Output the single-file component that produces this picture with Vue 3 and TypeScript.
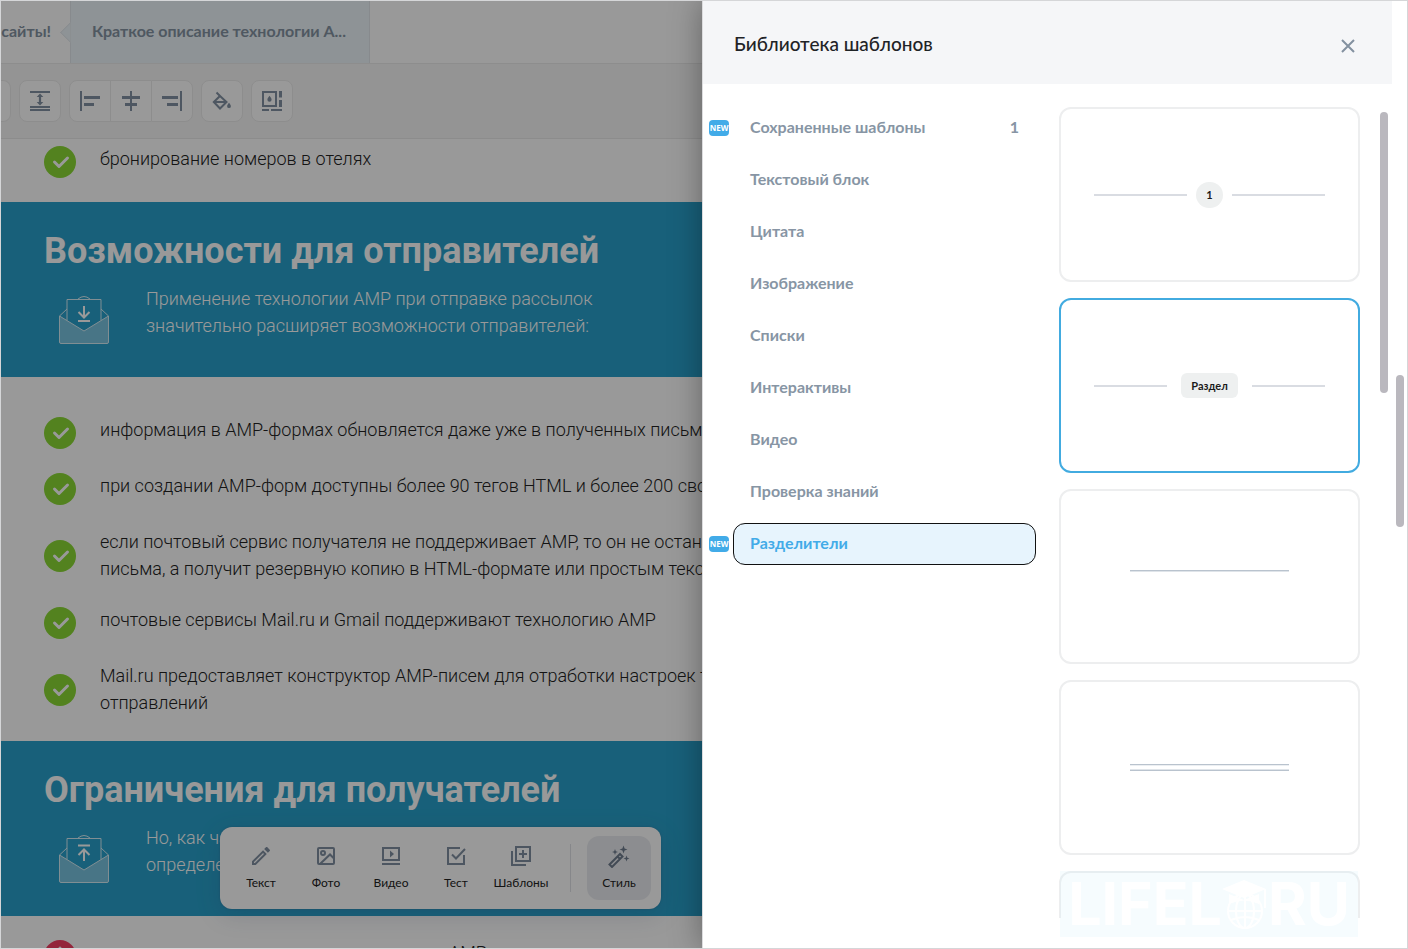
<script setup lang="ts">
import { ref } from 'vue'

interface ListItem { lines: string[] }
interface Category { name: string; isNew?: boolean; count?: number }
interface Tool { name: string; icon: string }

const features: ListItem[] = [
  { lines: ['информация в AMP-формах обновляется даже уже в полученных письмах'] },
  { lines: ['при создании AMP-форм доступны более 90 тегов HTML и более 200 свойств'] },
  {
    lines: [
      'если почтовый сервис получателя не поддерживает AMP, то он не останется',
      'письма, а получит резервную копию в HTML-формате или простым текстом',
    ],
  },
  { lines: ['почтовые сервисы Mail.ru и Gmail поддерживают технологию AMP'] },
  { lines: ['Mail.ru предоставляет конструктор AMP-писем для отработки настроек таких', 'отправлений'] },
]

const categories: Category[] = [
  { name: 'Сохраненные шаблоны', isNew: true, count: 1 },
  { name: 'Текстовый блок' },
  { name: 'Цитата' },
  { name: 'Изображение' },
  { name: 'Списки' },
  { name: 'Интерактивы' },
  { name: 'Видео' },
  { name: 'Проверка знаний' },
  { name: 'Разделители', isNew: true },
]

const tools: Tool[] = [
  { name: 'Текст', icon: 'text' },
  { name: 'Фото', icon: 'photo' },
  { name: 'Видео', icon: 'video' },
  { name: 'Тест', icon: 'test' },
  { name: 'Шаблоны', icon: 'templates' },
]

const active = ref('Разделители')
</script>

<template>
  <div class="frame">
    <main class="editor">
      <nav class="tabs">
        <button class="tab tab-prev">сайты!</button>
        <button class="tab tab-current">Краткое описание технологии А...</button>
      </nav>

      <div class="toolbar">
        <button class="tool tool-cut" aria-label="Отступ сверху"></button>
        <button class="tool" aria-label="Высота блока">
          <svg viewBox="0 0 20 20"><path d="M0 0h20v2H0zM0 15h20v2H0zM0 18h20v2H0zM10 2.600l3.300 3.400h-2.200v5h2.200L10 14.400 6.700 11h2.200V6H6.700z" /></svg>
        </button>
        <div class="group">
          <button class="tool" aria-label="По левому краю">
            <svg viewBox="0 0 20 20"><path d="M0 0h2v20H0zM4 5h16v3H4zM4 12h10v3H4z" /></svg>
          </button>
          <button class="tool" aria-label="По центру">
            <svg viewBox="0 0 20 20"><path d="M9 0h2v20H9zM1 5h18v3H1zM4 12h12v3H4z" /></svg>
          </button>
          <button class="tool" aria-label="По правому краю">
            <svg viewBox="0 0 20 20"><path d="M18 0h2v20h-2zM0 5h16v3H0zM5 12h11v3H5z" /></svg>
          </button>
        </div>
        <button class="tool" aria-label="Заливка">
          <svg viewBox="0 0 20 20">
            <path class="line" d="M4.500 1.500l4 4M8 5l6.500 6L8 17.500 1.800 11z M2 11h12" />
            <path d="M17 11.800c1.200 1.500 1.900 2.500 1.900 3.400a1.900 1.900 0 0 1-3.800 0c0-.9.700-1.900 1.900-3.400z" />
          </svg>
        </button>
        <button class="tool" aria-label="Поля блока">
          <svg viewBox="0 0 20 20">
            <path class="line" d="M1 1h13v14H1z" />
            <path d="M17 0h3v6.500h-3zM17 9h3v7h-3zM0 18h7v2H0zM9 18h11v2H9zM7.500 4.800c1.400 1.800 2.100 2.900 2.100 3.900a2.100 2.100 0 0 1-4.200 0c0-1 .7-2.100 2.100-3.900z" />
          </svg>
        </button>
      </div>

      <article class="doc">
        <ul class="list list-top">
          <li>
            <svg class="mark" viewBox="0 0 32 32"><circle cx="16" cy="16" r="16" /><path d="M10.500 16l4.500 4.500 8.500-8.500" /></svg>
            <p>бронирование номеров в отелях</p>
          </li>
        </ul>

        <section class="banner">
          <h2>Возможности для отправителей</h2>
          <div class="lead">
            <svg class="letter" viewBox="0 0 52 51">
              <path class="fill" d="M1.500 21L26 36l24.500-15v26q0 1.500-1.500 1.500H3q-1.500 0-1.500-1.500z" />
              <path class="edge" d="M9 25.500V4.500h34v21M9 14l-7.500 7M43 14l7.500 7M20 4q6-5 12 0" />
              <path class="arrow" d="M26 11v11M20.500 17l5.500 5.500 5.500-5.500M20 26h12" />
            </svg>
            <p>Применение технологии AMP при отправке рассылок<br />значительно расширяет возможности отправителей:</p>
          </div>
        </section>

        <ul class="list">
          <li v-for="item in features" :key="item.lines[0]">
            <svg class="mark" viewBox="0 0 32 32"><circle cx="16" cy="16" r="16" /><path d="M10.500 16l4.500 4.500 8.500-8.500" /></svg>
            <p><template v-for="(line, i) in item.lines" :key="line"><br v-if="i" />{{ line }}</template></p>
          </li>
        </ul>

        <section class="banner">
          <h2>Ограничения для получателей</h2>
          <div class="lead">
            <svg class="letter" viewBox="0 0 52 51">
              <path class="fill" d="M1.500 21L26 36l24.500-15v26q0 1.500-1.500 1.500H3q-1.500 0-1.500-1.500z" />
              <path class="edge" d="M9 25.500V4.500h34v21M9 14l-7.500 7M43 14l7.500 7M20 4q6-5 12 0" />
              <path class="arrow" d="M26 27V16M20.500 21l5.500-5.500 5.500 5.500M20 11.500h12" />
            </svg>
            <p>Но, как часто бывает, есть<br />определенные ограничения:</p>
          </div>
        </section>

        <ul class="list list-next">
          <li>
            <svg class="mark mark-alert" viewBox="0 0 32 32"><circle cx="16" cy="16" r="16" /><path d="M16 8v11M16 24v0" /></svg>
            <p>не все почтовые сервисы поддерживают AMP</p>
          </li>
        </ul>
      </article>

      <div class="dock">
        <button v-for="tool in tools" :key="tool.name" class="dock-item">
          <svg viewBox="0 0 24 24">
            <path v-if="tool.icon === 'text'" d="M14.060 9.020l.92.92L5.920 19H5v-.92l9.060-9.060M17.660 3c-.25 0-.51.1-.7.29l-1.830 1.830 3.750 3.750 1.830-1.830c.39-.39.39-1.020 0-1.410l-2.340-2.340c-.2-.2-.45-.29-.71-.29zm-3.600 3.190L3 17.250V21h3.750L17.810 9.940l-3.750-3.750z" />
            <g v-else-if="tool.icon === 'photo'" class="line">
              <rect x="4" y="4" width="16" height="16" rx="1" />
              <circle cx="9" cy="9" r="2" />
              <path d="M6 20L16 10.500l4 4" />
            </g>
            <g v-else-if="tool.icon === 'video'">
              <path class="line" d="M4 4h16v12H4zM3 20h18" />
              <path d="M11 6.500l4 3.500-4 3.500z" />
            </g>
            <path v-else-if="tool.icon === 'test'" class="line" d="M16 4H4v16h16v-9M8 10.500l4 4L21 5" />
            <path v-else class="line" d="M7 3h14v14H7zM3 7v14h14M14 6v8M10 10h8" />
          </svg>
          <span>{{ tool.name }}</span>
        </button>
        <i class="dock-rule"></i>
        <button class="dock-item dock-active">
          <svg viewBox="0 0 24 24">
            <path class="wand" d="M2.500 20.500L13 10l2.500 2.500L5 23zM10.500 12.500l2.500 2.500" />
            <path d="M16.500 1.500l1.100 2.900 2.900 1.100-2.900 1.100-1.100 2.900-1.100-2.900-2.900-1.100 2.900-1.100zM8 5l.8 2.200L11 8l-2.200.8L8 11l-.8-2.200L5 8l2.200-.8zM19.500 11.500l.8 2.200 2.200.8-2.200.8-.8 2.200-.8-2.200-2.200-.8 2.200-.8z" />
          </svg>
          <span>Стиль</span>
        </button>
      </div>
    </main>

    <div class="shade"></div>

    <aside class="drawer">
      <div class="panel">
        <header class="head">
          <h1>Библиотека шаблонов</h1>
          <button class="close" aria-label="Закрыть">
            <svg viewBox="0 0 14 14"><path d="M1 1l12 12M13 1L1 13" /></svg>
          </button>
        </header>
        <div class="body">
          <nav class="menu">
            <button
              v-for="c in categories"
              :key="c.name"
              class="entry"
              :class="{ selected: active === c.name }"
              @click="active = c.name"
            >
              <span v-if="c.isNew" class="badge">NEW</span>
              <span>{{ c.name }}</span>
              <span v-if="c.count">{{ c.count }}</span>
            </button>
          </nav>
          <div class="cards">
            <button class="card">
              <i class="rule"></i><span class="dot">1</span><i class="rule"></i>
            </button>
            <button class="card card-picked">
              <i class="rule"></i><span class="pill">Раздел</span><i class="rule"></i>
            </button>
            <button class="card card-raised" aria-label="Линия"><i class="stripe"></i></button>
            <button class="card" aria-label="Двойная линия"><i class="stripe stripe-double"></i></button>
            <button class="card" aria-label="Разделитель"></button>
          </div>
          <i class="thumb thumb-inner"></i>
        </div>
      </div>
      <div class="track"><i class="thumb thumb-outer"></i></div>
      <div class="watermark">
        <span>LIFEL</span>
        <svg viewBox="0 0 46 50">
          <path d="M0 10L22 1l22 9-22 9zM7 15l15 6 15-6v10q-15-7-30 0zM42 10h2v19h-2z" />
          <g class="globe">
            <circle cx="23" cy="32" r="17" />
            <ellipse cx="23" cy="32" rx="9" ry="17" />
            <path d="M23 17v32M6 32h34M9 41q14-6 28 0" />
          </g>
        </svg>
        <span>RU</span>
      </div>
    </aside>
  </div>
</template>

<style>
body {
  margin: 0;
}
</style>

<style scoped>
* {
  box-sizing: border-box;
}
button {
  margin: 0;
  padding: 0;
  border: 0;
  background: none;
  font: inherit;
  color: inherit;
  cursor: pointer;
}
h1,
h2,
p,
ul {
  margin: 0;
  padding: 0;
}
svg {
  display: block;
  flex: none;
}
.frame {
  position: relative;
  height: 100vh;
  overflow: hidden;
  border: 1px solid #d5d6d8;
  background: #fff;
  font-family: Lato, "Open Sans", sans-serif;
}
.editor {
  position: relative;
  height: 100%;
  overflow: hidden;
}
.tabs {
  display: flex;
  height: 63px;
  border-bottom: 1px solid #ebebeb;
}
.tab {
  padding-bottom: 4px;
  font-size: 16px;
  font-weight: 700;
  color: #8493a2;
  white-space: nowrap;
}
.tab-prev {
  display: flex;
  justify-content: flex-end;
  align-items: center;
  width: 69px;
  padding-right: 19px;
  overflow: hidden;
}
.tab-current {
  position: relative;
  padding: 0 23px 4px 21px;
  border: 1px solid #e2e7eb;
  border-width: 0 1px;
  background: #edf5fa;
}
.tab-current::before {
  content: "";
  position: absolute;
  left: -8px;
  top: 24px;
  width: 14px;
  height: 14px;
  border: 1px solid #e2e7eb;
  border-width: 0 0 1px 1px;
  background: #edf5fa;
  transform: rotate(45deg);
  clip-path: polygon(0 0, 100% 100%, 0 100%);
}
.toolbar {
  display: flex;
  gap: 8px;
  padding: 16px 0;
  border-bottom: 1px solid #e9e9e9;
  background: #f7f7f7;
}
.tool {
  display: flex;
  align-items: center;
  justify-content: center;
  width: 42px;
  height: 42px;
  border: 1px solid #ececec;
  border-radius: 8px;
  background: #fff;
}
.tool svg {
  width: 20px;
  height: 20px;
  fill: #8392a3;
}
.tool-cut {
  width: 10px;
  border-left: 0;
  border-radius: 0 8px 8px 0;
}
.group {
  display: flex;
}
.group .tool + .tool {
  margin-left: -1px;
}
.group .tool:first-child {
  border-radius: 8px 0 0 8px;
}
.group .tool:nth-child(2) {
  border-radius: 0;
}
.group .tool:last-child {
  border-radius: 0 8px 8px 0;
}
.line {
  fill: none;
  stroke: #8392a3;
  stroke-width: 2;
}
.doc {
  font-family: Roboto, "Open Sans", sans-serif;
  font-size: 18px;
  line-height: 27px;
  font-weight: 300;
}
.list {
  display: grid;
  gap: 24px;
  padding: 40px 43px 24px;
  list-style: none;
  color: #222;
  white-space: nowrap;
}
.list-top {
  padding-top: 7px;
}
.list-next {
  padding-top: 24px;
}
.list li {
  display: grid;
  grid-template-columns: 32px 1fr;
  gap: 24px;
}
.list p {
  margin: -1px 0 1px;
}
.mark {
  align-self: center;
  width: 32px;
  height: 32px;
  fill: #8ad935;
}
.mark path {
  fill: none;
  stroke: #fff;
  stroke-width: 3;
  stroke-linecap: round;
  stroke-linejoin: round;
}
.mark-alert {
  fill: #f63e63;
}
.banner {
  height: 175px;
  padding: 28px 43px 0;
  background: #28a1cb;
  color: #fff;
}
.banner h2 {
  font-size: 36px;
  line-height: 43px;
  font-weight: 700;
}
.lead {
  display: flex;
  gap: 36px;
  padding: 12px 0 0 14px;
  white-space: nowrap;
}
.letter {
  width: 52px;
  height: 51px;
  margin-top: 10px;
}
.letter .fill {
  fill: rgba(255, 255, 255, 0.38);
  stroke: #d5edf6;
}
.letter .edge {
  fill: none;
  stroke: #d5edf6;
}
.letter .arrow {
  fill: none;
  stroke: #fff;
  stroke-width: 2;
}
.dock {
  position: absolute;
  left: 219px;
  bottom: 39px;
  display: flex;
  align-items: center;
  gap: 1px;
  padding: 9px 10px 9px 9px;
  border-radius: 12px;
  background: #fff;
  box-shadow: 0 6px 24px rgba(60, 80, 120, 0.18), 0 0 2px rgba(60, 80, 120, 0.4);
}
.dock-item {
  display: flex;
  flex-direction: column;
  align-items: center;
  gap: 6px;
  width: 64px;
  height: 64px;
  padding-top: 8px;
  font-size: 12px;
  line-height: 18px;
  color: #222;
}
.dock-item svg {
  width: 24px;
  height: 24px;
  fill: #8190a2;
}
.dock-item .line {
  fill: none;
  stroke: #8190a2;
}
.dock-item .wand {
  fill: none;
  stroke: #6f7c8e;
  stroke-width: 2;
}
.dock-rule {
  width: 1px;
  height: 48px;
  margin: 0 15px 0 16px;
  background: #e0e2e6;
}
.dock-active {
  border-radius: 12px;
  background: #eaecf0;
}
.dock-active svg {
  fill: #6f7c8e;
}
.shade {
  position: absolute;
  inset: 0;
  background: rgba(0, 0, 0, 0.4);
}
.drawer {
  position: absolute;
  top: 0;
  right: 0;
  bottom: 0;
  display: flex;
  width: calc(50% + 2px);
  border-left: 1px solid #dcdcde;
  background: #fff;
  box-shadow: 0 0 30px rgba(0, 0, 0, 0.35);
}
.panel {
  display: flex;
  flex: 1;
  flex-direction: column;
  min-width: 0;
}
.head {
  display: flex;
  align-items: center;
  justify-content: space-between;
  flex: none;
  height: 83px;
  padding: 0 34px 0 31px;
  background: #f5f6f8;
}
.head h1 {
  padding-top: 2px;
  font-size: 19px;
  line-height: 24px;
  font-weight: 500;
  color: #1f2326;
}
.close {
  display: grid;
  place-items: center;
  width: 20px;
  height: 20px;
  margin-top: 6px;
}
.close svg {
  width: 14px;
  height: 14px;
  fill: none;
  stroke: #8391a0;
  stroke-width: 2;
}
.body {
  display: flex;
  flex: 1;
  min-height: 0;
  padding: 23px 4px 30px 30px;
}
.menu {
  display: flex;
  flex: 1 1 2px;
  flex-direction: column;
  gap: 10px;
  margin-right: 23px;
}
.entry {
  position: relative;
  display: flex;
  align-items: center;
  justify-content: space-between;
  height: 42px;
  padding: 0 16px 4px;
  border: 1px solid transparent;
  border-radius: 12px;
  font-size: 16px;
  font-weight: 700;
  color: #8795a4;
}
.selected {
  border-color: #111;
  background: #e7f4fd;
  color: #42abe8;
}
.badge {
  position: absolute;
  left: -25px;
  top: 12px;
  width: 20px;
  height: 16px;
  border-radius: 4px;
  background: #42abe8;
  color: #fff;
  font-family: "Open Sans", sans-serif;
  font-size: 8px;
  line-height: 16px;
  text-align: center;
}
.cards {
  display: flex;
  flex: 1;
  flex-direction: column;
  gap: 16px;
  overflow: hidden;
}
.card {
  display: flex;
  flex: none;
  align-items: center;
  justify-content: center;
  height: 175px;
  padding: 0 33px;
  border: 2px solid #edeeef;
  border-radius: 12px;
  background: #fff;
  font-size: 11px;
  font-weight: 700;
  color: #1b1b1b;
}
.card-picked {
  border-color: #42abe0;
}
.card-raised {
  padding-bottom: 12px;
}
.rule {
  flex: 1;
  height: 2px;
  background: #d9dce2;
}
.dot {
  width: 27px;
  margin: 0 9px;
  border-radius: 13px;
  background: #eef0f0;
  line-height: 26px;
}
.pill {
  margin: 0 14px;
  padding: 0 10px;
  border-radius: 6px;
  background: #eef0f0;
  line-height: 25px;
}
.stripe {
  width: 159px;
  height: 2px;
  border-top: 1px solid #b9c3ce;
  background: #dfe4e9;
}
.stripe-double {
  height: 7px;
  border-bottom: 1px solid #b9c3ce;
  background: linear-gradient(#eceff2 1px, #fff 1px, #fff 4px, #dfe4e9 4px);
}
.thumb {
  flex: none;
  width: 8px;
  border-radius: 4px;
  background: #bab8be;
}
.thumb-inner {
  height: 281px;
  margin: 5px 0 0 20px;
}
.track {
  display: flex;
  flex: none;
  width: 15px;
  padding-left: 4px;
}
.thumb-outer {
  height: 152px;
  margin-top: 374px;
}
.watermark {
  position: absolute;
  right: 49px;
  bottom: 11px;
  display: flex;
  align-items: center;
  justify-content: center;
  width: 298px;
  height: 66px;
  background: rgba(208, 240, 252, 0.2);
  color: #fff;
  font-family: Inter, sans-serif;
  font-size: 59px;
  line-height: 66px;
  font-weight: 700;
}
.watermark svg {
  width: 46px;
  height: 50px;
  fill: #fff;
}
.watermark .globe {
  fill: none;
  stroke: #fff;
  stroke-width: 2;
}
</style>
